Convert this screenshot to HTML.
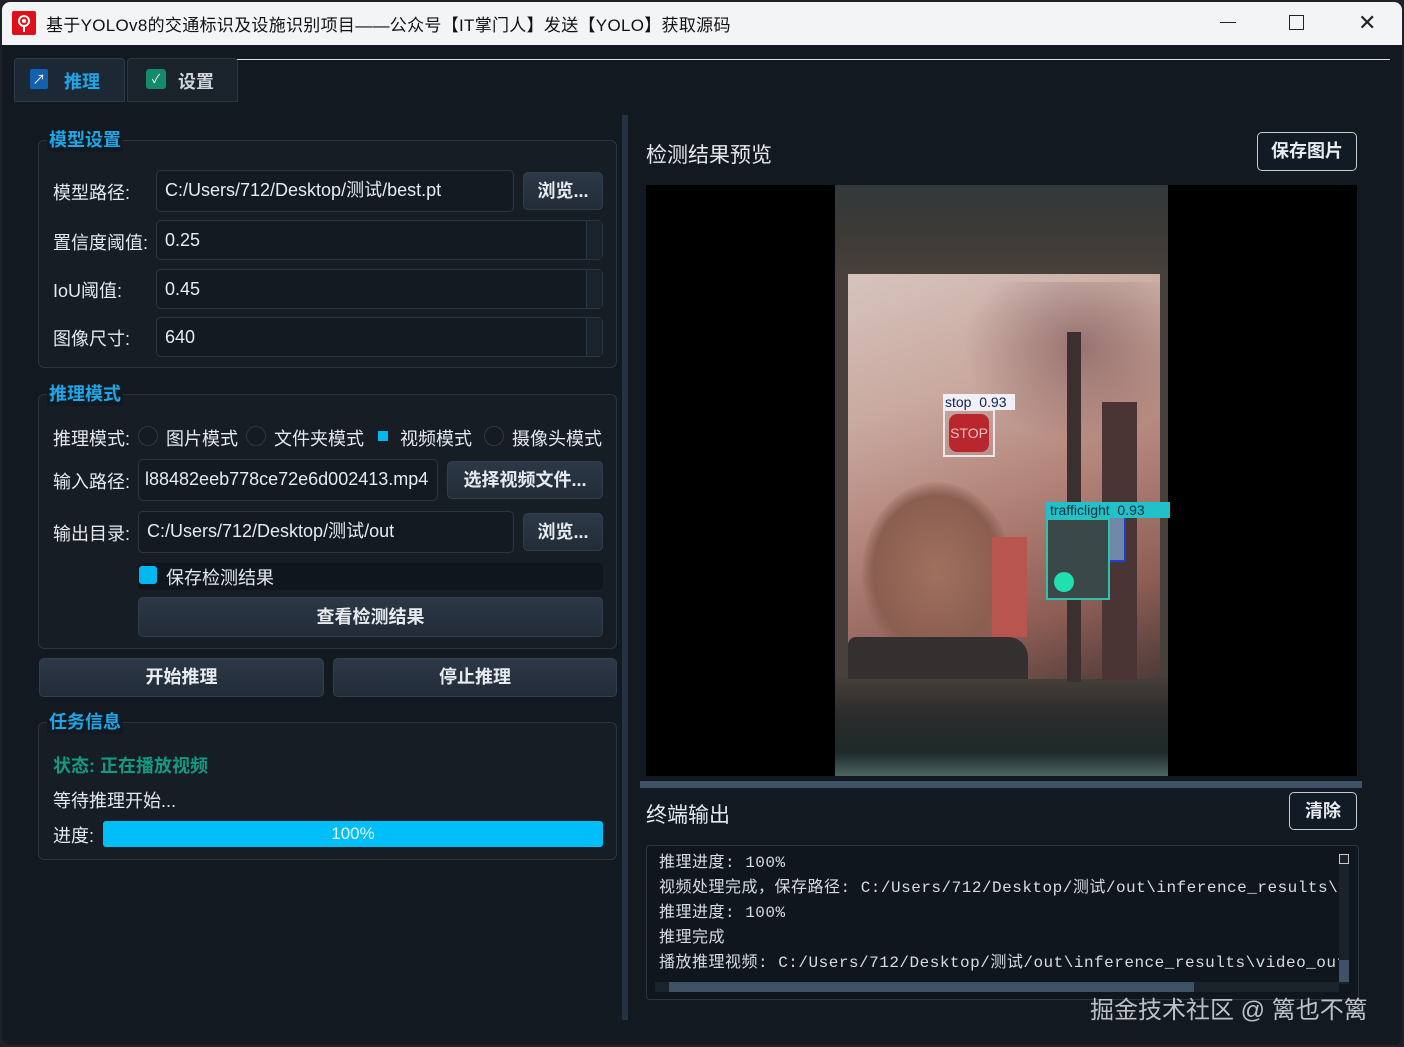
<!DOCTYPE html>
<html><head><meta charset="utf-8"><style>
*{box-sizing:border-box;margin:0;padding:0}
body{width:1404px;height:1047px;background:#1e2228;font-family:"Liberation Sans","Noto Sans CJK SC",sans-serif;position:relative;overflow:hidden;color:#e6e9ee}
.a{position:absolute}
.win{left:2px;top:2px;width:1400px;height:1043px;background:#121920;border-radius:8px;overflow:hidden}
.title{left:0;top:0;width:1400px;height:43px;background:#f3f4f6;color:#111;font-size:17px}
.lbl{font-size:18px;color:#e6e9ee}
.inp{background:#131a22;border:1px solid #2c3642;border-radius:5px;font-size:18px;padding-left:8px;line-height:38px;color:#e8ebef;white-space:nowrap;overflow:hidden}
.btn{background:linear-gradient(#2c3847,#222c38);border:1px solid #323e4c;border-radius:5px;font-size:18px;font-weight:bold;text-align:center;color:#e8ebef}
.grp{border:1px solid #2a3440;border-radius:6px;background:#161d25}
.gt{font-size:18px;font-weight:bold;color:#1ea7e8;background:#121920;padding:0 2px}
.spin{width:16px;border-left:1px solid #2c3642;background:#1a222c}
.radio{width:20px;height:20px;border-radius:50%;border:1px solid #2e3844;background:#141b23}
.mono{font-family:"Liberation Mono","Noto Sans CJK SC",monospace;font-size:16px;color:#d8dce2;line-height:25px;white-space:nowrap}
</style></head><body>
<div class="a win">
 <div class="a title">
  <div class="a" style="left:10px;top:9px;width:24px;height:24px;background:#e0101a;border-radius:2px">
   <div class="a" style="left:6px;top:4px;width:12px;height:12px;border:2px solid #fff;border-radius:50%"></div>
   <div class="a" style="left:10px;top:8px;width:4px;height:4px;background:#fff;border-radius:50%"></div>
   <div class="a" style="left:11px;top:16px;width:2px;height:5px;background:#fff"></div>
  </div>
  <div class="a" style="left:44px;top:9px;letter-spacing:0.3px">基于YOLOv8的交通标识及设施识别项目——公众号【IT掌门人】发送【YOLO】获取源码</div>
  <div class="a" style="left:1218px;top:20px;width:16px;height:1px;background:#222"></div>
  <div class="a" style="left:1287px;top:13px;width:15px;height:15px;border:1.5px solid #222"></div>
  <div class="a" style="left:1356px;top:8px;font-size:22px;color:#222">✕</div>
 </div>
 <div class="a" style="left:190px;top:57px;width:1198px;height:1px;background:#ddd"></div>
 <div class="a" style="left:12px;top:56px;width:111px;height:44px;background:#1d2835;border:1px solid #2c3a4a;border-radius:4px 4px 0 0"></div>
 <div class="a" style="left:28px;top:67px;width:18px;height:20px;background:#1460b0;border-radius:2px;color:#fff;font-size:13px;text-align:center">↗</div>
 <div class="a" style="left:62px;top:66px;font-size:18px;font-weight:bold;color:#1ea7e8">推理</div>
 <div class="a" style="left:125px;top:56px;width:111px;height:44px;background:#1a222c;border:1px solid #2c3642;border-radius:4px 4px 0 0"></div>
 <div class="a" style="left:144px;top:67px;width:20px;height:20px;background:#138a6a;border-radius:3px;color:#fff;font-size:12px;text-align:center;line-height:20px">✓</div>
 <div class="a" style="left:176px;top:66px;font-size:18px;font-weight:bold;color:#d0d4da">设置</div>
 <div class="a" style="left:620px;top:113px;width:6px;height:905px;background:#253241"></div>

 <div class="a grp" style="left:36px;top:138px;width:579px;height:228px"></div>
 <div class="a gt" style="left:45px;top:124px">模型设置</div>
 <div class="a lbl" style="left:51px;top:177px">模型路径:</div>
 <div class="a inp" style="left:154px;top:168px;width:358px;height:42px">C:/Users/712/Desktop/测试/best.pt</div>
 <div class="a btn" style="left:521px;top:170px;width:80px;height:38px;line-height:36px">浏览...</div>
 <div class="a lbl" style="left:51px;top:227px">置信度阈值:</div>
 <div class="a inp" style="left:154px;top:218px;width:447px;height:40px">0.25</div><div class="a spin" style="left:584px;top:219px;height:38px"></div>
 <div class="a lbl" style="left:51px;top:275px">IoU阈值:</div>
 <div class="a inp" style="left:154px;top:267px;width:447px;height:40px">0.45</div><div class="a spin" style="left:584px;top:268px;height:38px"></div>
 <div class="a lbl" style="left:51px;top:323px">图像尺寸:</div>
 <div class="a inp" style="left:154px;top:315px;width:447px;height:40px">640</div><div class="a spin" style="left:584px;top:316px;height:38px"></div>

 <div class="a grp" style="left:36px;top:392px;width:579px;height:255px"></div>
 <div class="a gt" style="left:45px;top:378px">推理模式</div>
 <div class="a lbl" style="left:51px;top:423px">推理模式:</div>
 <div class="a radio" style="left:136px;top:424px"></div><div class="a lbl" style="left:164px;top:423px">图片模式</div>
 <div class="a radio" style="left:244px;top:424px"></div><div class="a lbl" style="left:272px;top:423px">文件夹模式</div>
 <div class="a" style="left:376px;top:429px;width:10px;height:10px;background:#00b8f0"></div><div class="a lbl" style="left:398px;top:423px">视频模式</div>
 <div class="a radio" style="left:482px;top:424px"></div><div class="a lbl" style="left:510px;top:423px">摄像头模式</div>
 <div class="a lbl" style="left:51px;top:466px">输入路径:</div>
 <div class="a inp" style="left:136px;top:457px;width:300px;height:42px;padding-left:6px">l88482eeb778ce72e6d002413.mp4</div>
 <div class="a btn" style="left:445px;top:459px;width:156px;height:38px;line-height:36px">选择视频文件...</div>
 <div class="a lbl" style="left:51px;top:518px">输出目录:</div>
 <div class="a inp" style="left:136px;top:509px;width:376px;height:42px">C:/Users/712/Desktop/测试/out</div>
 <div class="a btn" style="left:521px;top:511px;width:80px;height:38px;line-height:36px">浏览...</div>
 <div class="a" style="left:136px;top:561px;width:465px;height:27px;background:#10161d;border-radius:4px"></div>
 <div class="a" style="left:137px;top:564px;width:18px;height:18px;background:#00b8f0;border-radius:3px"></div>
 <div class="a lbl" style="left:164px;top:562px">保存检测结果</div>
 <div class="a btn" style="left:136px;top:595px;width:465px;height:40px;line-height:38px">查看检测结果</div>

 <div class="a btn" style="left:37px;top:656px;width:285px;height:39px;line-height:37px">开始推理</div>
 <div class="a btn" style="left:331px;top:656px;width:284px;height:39px;line-height:37px">停止推理</div>

 <div class="a grp" style="left:36px;top:720px;width:579px;height:138px"></div>
 <div class="a gt" style="left:45px;top:706px">任务信息</div>
 <div class="a" style="left:51px;top:750px;font-size:18px;font-weight:bold;color:#129a82">状态: 正在播放视频</div>
 <div class="a lbl" style="left:51px;top:785px">等待推理开始...</div>
 <div class="a lbl" style="left:51px;top:820px">进度:</div>
 <div class="a" style="left:101px;top:819px;width:500px;height:26px;background:#00bff8;border-radius:3px;text-align:center;font-size:17px;line-height:26px;color:#eaf8ff">100%</div>

 <div class="a" style="left:644px;top:137px;font-size:21px;color:#e6e9ee">检测结果预览</div>
 <div class="a btn" style="left:1255px;top:130px;width:100px;height:39px;line-height:37px;background:#121a26;border:1px solid #c8ccd2">保存图片</div>
 <div class="a" style="left:644px;top:183px;width:711px;height:591px;background:#000"></div>
 <div class="a" style="left:833px;top:183px;width:333px;height:591px;background:linear-gradient(#32393c 0,#3d3a36 8%,#47403b 15%,#47403b 83%,#2b2b2b 90%,#1f2a2a 96%,#4a6663 100%)"></div>
 <div class="a" style="left:846px;top:272px;width:312px;height:405px;background:linear-gradient(160deg,#d6c4bc 0%,#c9a89f 30%,#b18278 55%,#8d5e55 80%,#4d3b38 100%)"></div>
 <div class="a" style="left:860px;top:480px;width:150px;height:180px;border-radius:50% 50% 10% 10%;background:radial-gradient(#a0705e,#8a5e50 60%,rgba(130,90,80,0) 72%)"></div>
 <div class="a" style="left:960px;top:280px;width:198px;height:160px;background:radial-gradient(ellipse at 60% 40%,rgba(120,80,80,.6),rgba(150,110,110,0) 70%)"></div>
 <div class="a" style="left:990px;top:535px;width:35px;height:100px;background:#b8554e"></div>
 <div class="a" style="left:1065px;top:330px;width:14px;height:350px;background:#3c2f30"></div>
 <div class="a" style="left:1100px;top:400px;width:35px;height:278px;background:#4a3434"></div>
 <div class="a" style="left:846px;top:635px;width:180px;height:42px;background:#33302f;border-radius:8px 20px 0 0"></div>
 <div class="a" style="left:941px;top:407px;width:52px;height:48px;border:2px solid #e8e8ee"></div>
 <div class="a" style="left:947px;top:412px;width:40px;height:38px;background:#b8272e;border-radius:8px;color:#f0c0c0;font-size:14px;text-align:center;line-height:38px">STOP</div>
 <div class="a" style="left:941px;top:392px;width:72px;height:16px;background:#f0f0f6;color:#102050;font-size:14px;line-height:16px;padding-left:2px">stop&nbsp; 0.93</div>
 <div class="a" style="left:1086px;top:513px;width:38px;height:47px;border:2px solid #2040d0;background:#7088a8"></div>
 <div class="a" style="left:1044px;top:500px;width:124px;height:16px;background:#22c0c8;color:#103040;font-size:14px;line-height:16px;padding-left:4px">trafficlight&nbsp; 0.93</div>
 <div class="a" style="left:1044px;top:516px;width:64px;height:82px;border:2px solid #30c0b0;background:#3a4848"></div>
 <div class="a" style="left:1052px;top:570px;width:20px;height:20px;border-radius:50%;background:#20e0b0"></div>
 <div class="a" style="left:638px;top:779px;width:722px;height:7px;background:#3f5166"></div>
 <div class="a" style="left:644px;top:797px;font-size:21px;color:#e6e9ee">终端输出</div>
 <div class="a btn" style="left:1287px;top:790px;width:68px;height:38px;line-height:36px;background:#121a26;border:1px solid #c8ccd2">清除</div>
 <div class="a" style="left:644px;top:843px;width:713px;height:155px;border:1px solid #2c3642;border-radius:4px;background:#10161d;overflow:hidden">
  <div class="a mono" style="left:12px;top:5px;width:682px;overflow:hidden;letter-spacing:0.5px">推理进度: 100%<br>视频处理完成，保存路径: C:/Users/712/Desktop/测试/out\inference_results\video<br>推理进度: 100%<br>推理完成<br>播放推理视频: C:/Users/712/Desktop/测试/out\inference_results\video_output</div>
  <div class="a" style="left:692px;top:8px;width:10px;height:130px;background:#1a222c"></div>
  <div class="a" style="left:692px;top:8px;width:10px;height:10px;border:1px solid #ccc"></div>
  <div class="a" style="left:692px;top:114px;width:10px;height:22px;background:#3f5166"></div>
  <div class="a" style="left:8px;top:136px;width:684px;height:10px;background:#1a222c"></div>
  <div class="a" style="left:22px;top:136px;width:525px;height:10px;background:#3f5166"></div>
 </div>
 <div class="a" style="left:1088px;top:988px;font-size:24px;color:#d0d4d8;opacity:.9">掘金技术社区 @ 篱也不篱</div>
</div>
</body></html>
